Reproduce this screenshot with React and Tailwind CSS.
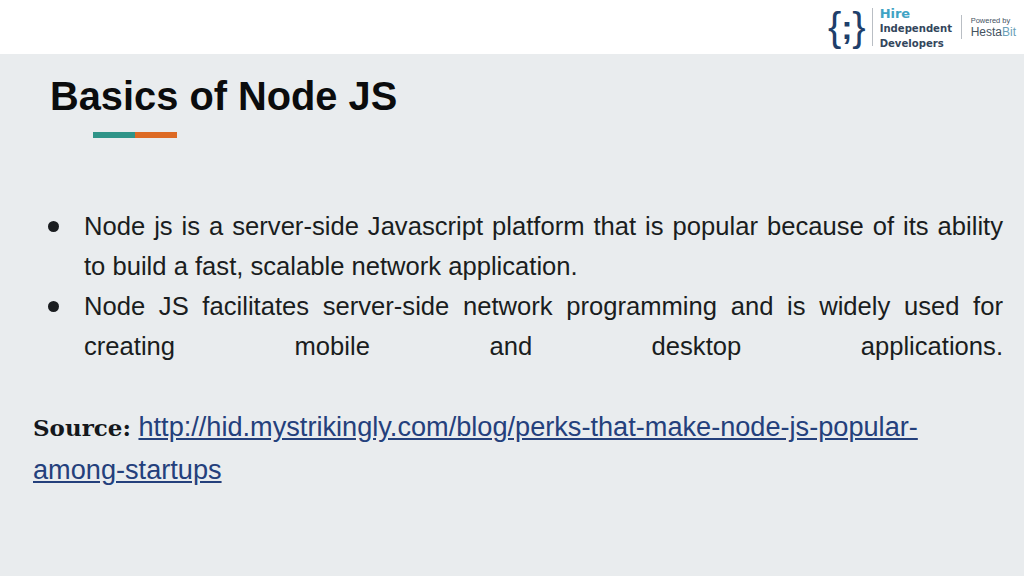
import React from "react";

const arial = { fontFamily: '"Liberation Sans", Arial, sans-serif' };

function Logo() {
  return (
    <div className="flex items-center h-full">
      <div className="flex items-center text-[#1f3f6b]">
        <span className="text-[40px] leading-none">{"{"}</span>
        <span className="text-[34px] leading-none font-bold w-[11px] text-center">;</span>
        <span className="text-[40px] leading-none">{"}"}</span>
      </div>
      <div className="w-px h-[38px] bg-[#b9bec4] ml-[6px]"></div>
      <div className="ml-[7px] mt-[4px] flex flex-col font-['DejaVu_Sans'] font-bold text-[#33465c] text-[10.1px] leading-[15px] w-[81px]">
        <span className="text-[#3fa3c4] text-[13px] leading-[14px]">Hire</span>
        <span>Independent</span>
        <span>Developers</span>
      </div>
      <div className="w-px h-[24px] bg-[#b9bec4]"></div>
      <div className="ml-[9px] flex flex-col text-[#44525f]">
        <span className="text-[7.5px] leading-[10px]">Powered by</span>
        <span className="text-[12px] leading-[13px]">Hesta<span className="text-[#6a9fb8]">Bit</span></span>
      </div>
    </div>
  );
}

function Bullet() {
  return (
    <span className="w-[36px] shrink-0 pt-[15px]">
      <span className="block w-[11px] h-[11px] rounded-full bg-[#1a1d20]"></span>
    </span>
  );
}

export default function App() {
  return (
    <div className="w-[1024px] h-[576px] overflow-hidden bg-[#e9ecee] flex flex-col text-[#1a1d20]" style={arial}>
      <header className="h-[54px] bg-white flex justify-end pr-[8px]">
        <Logo />
      </header>

      <main className="flex-1 flex flex-col">
        <h1 className="ml-[50px] mt-[17px] text-[39.8px] leading-[50px] font-bold text-[#0b0c0d]">Basics of Node JS</h1>
        <div className="ml-[93px] mt-[11px] flex h-[6px] w-[84px]">
          <div className="w-[42px] bg-[#2f9488]"></div>
          <div className="w-[42px] bg-[#dd6a24]"></div>
        </div>

        <ul className="ml-[48px] mr-[21px] mt-[68px] text-[25.6px] leading-[40px]">
          <li className="flex">
            <Bullet />
            <p className="flex-1 text-justify">
              Node js is a server-side Javascript platform that is popular because of its ability to build a fast, scalable network application.
            </p>
          </li>
          <li className="flex">
            <Bullet />
            <p className="flex-1 text-justify [text-align-last:justify]">
              Node JS facilitates server-side network programming and is widely used for creating mobile and desktop applications.
            </p>
          </li>
        </ul>

        <p className="ml-[33px] mr-[60px] mt-[40px] text-[27.15px] leading-[42px]">
          <span className="font-['DejaVu_Serif'] font-bold text-[23px] text-[#15181b]">Source:</span>{" "}
          <a className="text-[#24407c] underline" href="#">http://hid.mystrikingly.com/blog/perks-that-make-node-js-popular-among-startups</a>
        </p>
      </main>
    </div>
  );
}
